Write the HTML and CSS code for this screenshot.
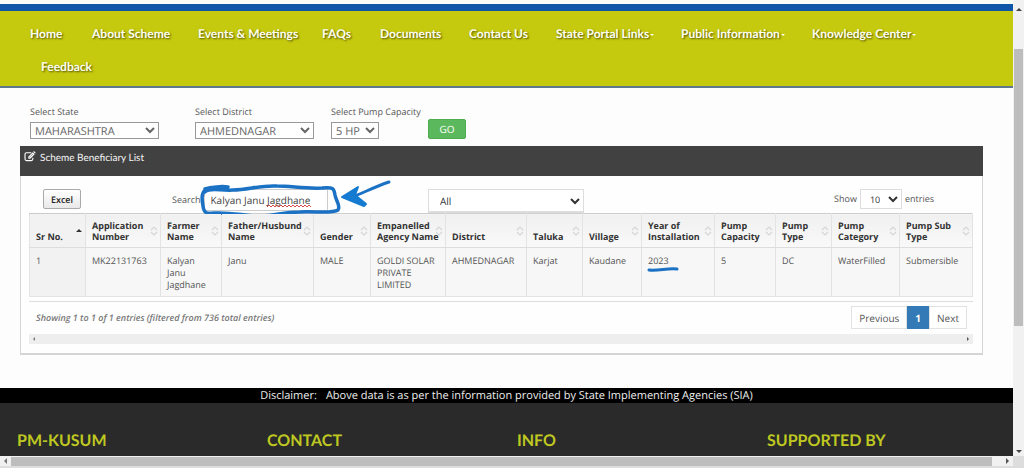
FILE: index.html
```html
<!DOCTYPE html>
<html lang="en">
<head>
<meta charset="utf-8">
<meta name="viewport" content="width=device-width, initial-scale=1">
<title>PM-KUSUM - Scheme Beneficiary List</title>
<link rel="stylesheet" href="styles.css">
</head>
<body>
<svg class="defs" aria-hidden="true">
  <symbol id="sort" viewBox="0 0 8 10"><path d="M1 4 L4 1 L7 4 M1 6 L4 9 L7 6" fill="none" stroke="#d6d6d6" stroke-width="1.2"/></symbol>
</svg>
<div class="window">
  <div class="page">
    <header class="site-header">
      <nav class="nav">
        <ul class="menu">
          <li><a href="#">Home</a></li>
          <li><a href="#">About Scheme</a></li>
          <li><a href="#">Events &amp; Meetings</a></li>
          <li><a href="#">FAQs</a></li>
          <li><a href="#">Documents</a></li>
          <li><a href="#">Contact Us</a></li>
          <li><a href="#" class="has-menu">State Portal Links</a></li>
          <li><a href="#" class="has-menu">Public Information</a></li>
          <li><a href="#" class="has-menu">Knowledge Center</a></li>
          <li class="second-row"><a href="#">Feedback</a></li>
        </ul>
      </nav>
    </header>

    <main class="main">
      <form class="filters">
        <div class="field field-state"><label for="state">Select State</label><select id="state"><option>MAHARASHTRA</option></select></div>
        <div class="field field-district"><label for="district">Select District</label><select id="district"><option>AHMEDNAGAR</option></select></div>
        <div class="field field-capacity"><label for="capacity">Select Pump Capacity</label><select id="capacity"><option>5 HP</option></select></div>
        <button type="button" class="go">GO</button>
      </form>

      <section class="panel">
        <h2 class="panel-title">
          <svg class="edit-icon" viewBox="0 0 14 12" aria-hidden="true"><path d="M8.500 1.700H3Q1.200 1.700 1.200 3.500V9Q1.200 10.800 3 10.800H8.500Q10.300 10.800 10.300 9V7.500" fill="none" stroke="#fff" stroke-width="1.300"/><path d="M5 8.500V6.200L10.200 1L12.500 3.300L7.300 8.500Z" fill="#fff"/><path d="M10.700 .6L11.300 0Q11.800-.3 12.300.2L13.300 1.200Q13.700 1.700 13.300 2.200L12.800 2.800Z" fill="#fff"/><path d="M6 7.400L10.400 3" stroke="#414141" stroke-width=".6"/></svg>
          Scheme Beneficiary List
        </h2>
        <div class="toolbar">
          <div><button type="button" class="excel">Excel</button></div>
          <div class="search">
            <label for="search">Search</label>
            <input id="search" type="text" value="Kalyan Janu Jagdhane" spellcheck="false">
            <svg class="ink search-ink" viewBox="0 0 230 46" aria-hidden="true">
              <path d="M33 11 C39 9 50 8 56 9 M33 12 C29 16 30 22 31 28 C32 35 34 36 42 35 C60 34 73 38 88 38 C105 38 109 34 128 34 C143 33 160 36 166 32 C169 28 164 23 163 17 C162 10 161 9 150 10 C134 11 119 8 105 8 C88 7 76 12 61 12 C49 13 37 9 33 14" fill="none" stroke="#1b72c4" stroke-width="3.500" stroke-linecap="round" stroke-linejoin="round"/>
              <path d="M217 4 C205 8 195 13 183 18" fill="none" stroke="#1b72c4" stroke-width="3" stroke-linecap="round"/>
              <path d="M170 19 L186 9 L183 17 L194 26 L192 28 Z" fill="#147bd1" stroke="#147bd1" stroke-width="2" stroke-linejoin="round"/>
              <path d="M95 29 l2-2 l2 2 l2-2 l2 2 l2-2 l2 2 l2-2 l2 2 l2-2 l2 2 l2-2 l2 2 l2-2 l2 2 l2-2 l2 2 l2-2 l2 2 l2-2 l2 2 l2-2 l2 2" fill="none" stroke="#d94a4a" stroke-width="1"/>
            </svg>
          </div>
          <div><select class="all" aria-label="Filter"><option>All</option></select></div>
          <div class="length"><label for="len">Show</label><select id="len"><option>10</option></select><span>entries</span></div>
        </div>

        <div class="table-wrap">
          <table class="grid">
            <colgroup><col class="w56"><col class="w75"><col class="w61"><col class="w92"><col class="w57"><col class="w75"><col class="w81"><col class="w56"><col class="w59"><col class="w73"><col class="w61"><col class="w56"><col class="w68"><col class="w73"></colgroup>
            <thead>
              <tr>
                <th class="sorted">Sr No.<span class="asc"></span></th>
                <th>Application<br>Number<svg class="sort"><use href="#sort"/></svg></th>
                <th>Farmer<br>Name<svg class="sort"><use href="#sort"/></svg></th>
                <th>Father/Husbund<br>Name<svg class="sort"><use href="#sort"/></svg></th>
                <th>Gender<svg class="sort"><use href="#sort"/></svg></th>
                <th>Empanelled<br>Agency Name<svg class="sort"><use href="#sort"/></svg></th>
                <th>District<svg class="sort"><use href="#sort"/></svg></th>
                <th>Taluka<svg class="sort"><use href="#sort"/></svg></th>
                <th>Village<svg class="sort"><use href="#sort"/></svg></th>
                <th>Year of<br>Installation<svg class="sort"><use href="#sort"/></svg></th>
                <th>Pump<br>Capacity<svg class="sort"><use href="#sort"/></svg></th>
                <th>Pump<br>Type<svg class="sort"><use href="#sort"/></svg></th>
                <th>Pump<br>Category<svg class="sort"><use href="#sort"/></svg></th>
                <th>Pump Sub<br>Type<svg class="sort"><use href="#sort"/></svg></th>
              </tr>
            </thead>
            <tbody>
              <tr>
                <td class="sorted">1</td><td>MK22131763</td><td>Kalyan<br>Janu<br>Jagdhane</td><td>Janu</td><td>MALE</td><td>GOLDI SOLAR<br>PRIVATE<br>LIMITED</td><td>AHMEDNAGAR</td><td>Karjat</td><td>Kaudane</td>
                <td class="year">2023<svg class="ink year-ink" viewBox="0 0 32 5" aria-hidden="true"><path d="M2 3 C12 4 20 1 30 2" fill="none" stroke="#1b72c4" stroke-width="3" stroke-linecap="round"/></svg></td>
                <td>5</td><td>DC</td><td>WaterFilled</td><td>Submersible</td>
              </tr>
            </tbody>
          </table>
        </div>
        <div class="table-foot">
          <p class="info">Showing 1 to 1 of 1 entries (filtered from 736 total entries)</p>
          <div class="pager"><button type="button">Previous</button><button type="button" class="current">1</button><button type="button">Next</button></div>
        </div>
        <div class="inner-scroll"><span class="tri left"></span><span class="tri right"></span></div>
      </section>
    </main>

    <p class="disclaimer"><span>Disclaimer:</span><span>Above data is as per the information provided by State Implementing Agencies (SIA)</span></p>
    <footer class="footer">
      <h3>PM-KUSUM</h3><h3>CONTACT</h3><h3>INFO</h3><h3>SUPPORTED BY</h3>
    </footer>
  </div>
  <div class="vscroll"><span class="tri up"></span><div class="vtrack"><div class="vthumb"></div></div><span class="tri down"></span></div>
  <div class="hscroll"><span class="tri left"></span><div class="hthumb"></div><span class="tri right"></span></div>
  <div class="corner"></div>
</div>
</body>
</html>
```

FILE: styles.css
```css
* { box-sizing: border-box; }
body { margin: 0; background: #fdfdfd; color: #555; font: 9px/12px "Open Sans", "Noto Sans", sans-serif; text-rendering: geometricPrecision; }
select, input, button { font-family: inherit; color: inherit; margin: 0; text-rendering: inherit; }
.defs { position: absolute; width: 0; height: 0; }

.window { display: grid; grid-template-columns: minmax(0, 1fr) 11px; grid-template-rows: 1fr 12px; min-height: 100vh; }
.page { display: flex; flex-direction: column; }

.site-header { border-top: 4px solid #f8faf5; }
.nav { border-top: 7px solid #0f56a8; border-bottom: 2px solid #5f7890; background: #c6ca0e; padding: 14px 0 11px 30px; }
.menu { list-style: none; margin: 0; padding: 0; display: grid; grid-template-columns: 62fr 106fr 124fr 58fr 89fr 87fr 125fr 131fr 201fr; row-gap: 16px; }
.menu a { color: #fffff0; text-decoration: none; text-shadow: 1px 1px 2px #4e5000; font: bold 12px/17px Lato, "Open Sans", sans-serif; white-space: nowrap; }
.second-row { grid-column: span 2; padding-left: 11px; }
.has-menu::after { content: ""; display: inline-block; margin-left: 1px; vertical-align: middle; border: 2px solid transparent; border-top-color: #fffff0; border-bottom: 0; }

.main { padding: 18px 30px 33px 20px; }
.filters { display: flex; align-items: flex-end; padding: 0 10px 7px; }
.field { display: flex; flex-direction: column; gap: 4px; align-items: flex-start; }
.field select { width: 100%; height: 17px; border: 1px solid #999; border-radius: 0; background: #fff; color: #666; font-size: 11px; line-height: 14px; padding: 0; }
.field label { white-space: nowrap; }
.field-state { width: 129px; margin-right: 36px; }
.field-district { width: 119px; margin-right: 17px; }
.field-capacity { width: 48px; margin-right: 49px; }
.go { width: 38px; height: 20px; border: 1px solid #4cae4c; border-radius: 2px; background: #5cb85c; color: #fff; font-size: 10px; padding: 0; }

.panel { border: 1px solid #d5d5d5; border-top: 0; border-bottom-width: 2px; background: #fefefe; padding-bottom: 9px; }
.panel-title { display: flex; gap: 4px; margin: 0 -1px; padding: 5px 4px 11px; background: #414141; color: #f5f5f5; font: 10px/14px Lato, "Open Sans", sans-serif; }
.edit-icon { width: 12px; height: 11px; overflow: visible; }

.toolbar { display: grid; grid-template-columns: 129px 256px 1fr auto; align-items: start; padding: 13px 48px 0 22px; }
.excel { width: 38px; height: 20px; padding: 0; border: 1px solid #aaa; border-radius: 2px; background: linear-gradient(#fff, #e9e9e9); color: #222; font-size: 9px; font-weight: 600; }
.search { position: relative; display: flex; align-items: center; gap: 3px; }
.search input { width: 124px; height: 22px; border: 1px solid #ccc; background: #fff; padding: 0 6px; font-size: 10px; color: #444; }
.ink { position: absolute; pointer-events: none; }
.search-ink { left: 0; top: -11px; width: 230px; height: 46px; }
.all { width: 156px; height: 24px; border: 1px solid #ddd; border-bottom-width: 2px; background: #fff; font-size: 10px; padding: 0 7px; color: #333; }
.length { display: flex; align-items: center; gap: 3px; }
.length select { width: 42px; height: 20px; border: 1px solid #ddd; background: #fff; font-size: 9px; padding: 0 5px; color: #333; }

.table-wrap { margin: 0 9px 0 8px; padding-bottom: 4px; border-bottom: 1px solid #ddd; }
.grid { width: 100%; table-layout: fixed; border-collapse: collapse; background: #f7f7f7; }
.grid th, .grid td { border: 1px solid #e3e3e3; padding: 6px 0 5px 6px; text-align: left; white-space: nowrap; position: relative; }
.grid th { vertical-align: bottom; font-size: 9px; line-height: 11px; font-weight: bold; color: #333; background: linear-gradient(#f0f0f0, #f9f9f9); border-top-color: #ccc; border-bottom-color: #ddd; }
.grid td { vertical-align: top; padding-top: 7px; }
.grid .sorted { background: #f2f2f2; }
.w56 { width: 56px; } .w57 { width: 57px; } .w59 { width: 59px; } .w61 { width: 61px; } .w68 { width: 68px; }
.w73 { width: 73px; } .w75 { width: 75px; } .w81 { width: 81px; } .w92 { width: 92px; }
.sort { position: absolute; right: 2px; top: 12px; width: 8px; height: 10px; }
.asc { position: absolute; right: 3px; top: 15px; border: 3px solid transparent; border-bottom-color: #333; border-top: 0; }
.year-ink { left: 5px; top: 19px; width: 32px; height: 5px; }

.table-foot { display: flex; justify-content: space-between; align-items: center; padding: 4px 15px 5px; }
.info { margin: 0; font-weight: 600; font-style: italic; color: #777; }
.pager { display: flex; }
.pager button { height: 23px; border: 1px solid #e2e2e2; background: #fff; padding: 0 7px; font-size: 10px; }
.pager .current { background: #337ab7; border-color: #337ab7; color: #fff; font-weight: bold; }
.inner-scroll { display: flex; justify-content: space-between; align-items: center; height: 10px; margin: 0 9px 0 8px; padding: 0 4px; background: #eee; }

.tri { width: 0; height: 0; border: 3px solid transparent; flex: none; }
.left { border-right-color: #777; border-left: 0; }
.right { border-left-color: #555; border-right: 0; }
.up { border-bottom-color: #444; border-top: 0; }
.down { border-top-color: #444; border-bottom: 0; }
.inner-scroll .tri { border-width: 2px; }
.inner-scroll .left { border-left: 0; }
.inner-scroll .right { border-right: 0; }

.disclaimer { display: flex; justify-content: center; gap: 9px; margin: 0; background: #000; color: #eee; font-size: 11px; line-height: 15px; }
.footer { flex: 1; display: grid; grid-template-columns: 250fr 250fr 250fr 246fr; padding: 28px 0 5px 17px; background: #2a2a2a; }
.footer h3 { margin: 0; color: #bfc821; font: bold 16px/20px Lato, "Open Sans", sans-serif; }

.vscroll { display: flex; flex-direction: column; align-items: center; background: #f1f1f1; padding: 8px 0 3px; }
.vtrack { flex: 1; width: 9px; padding: 38px 0 0; }
.vthumb { height: 69%; background: #bdbdbd; }
.hscroll { display: flex; align-items: center; gap: 4px; padding: 0 4px; background: #f1f1f1; border-bottom: 2px solid #ddd; }
.hthumb { flex: 1; height: 9px; margin-right: 10px; background: #bdbdbd; }
.corner { background: #ddd; }
```
